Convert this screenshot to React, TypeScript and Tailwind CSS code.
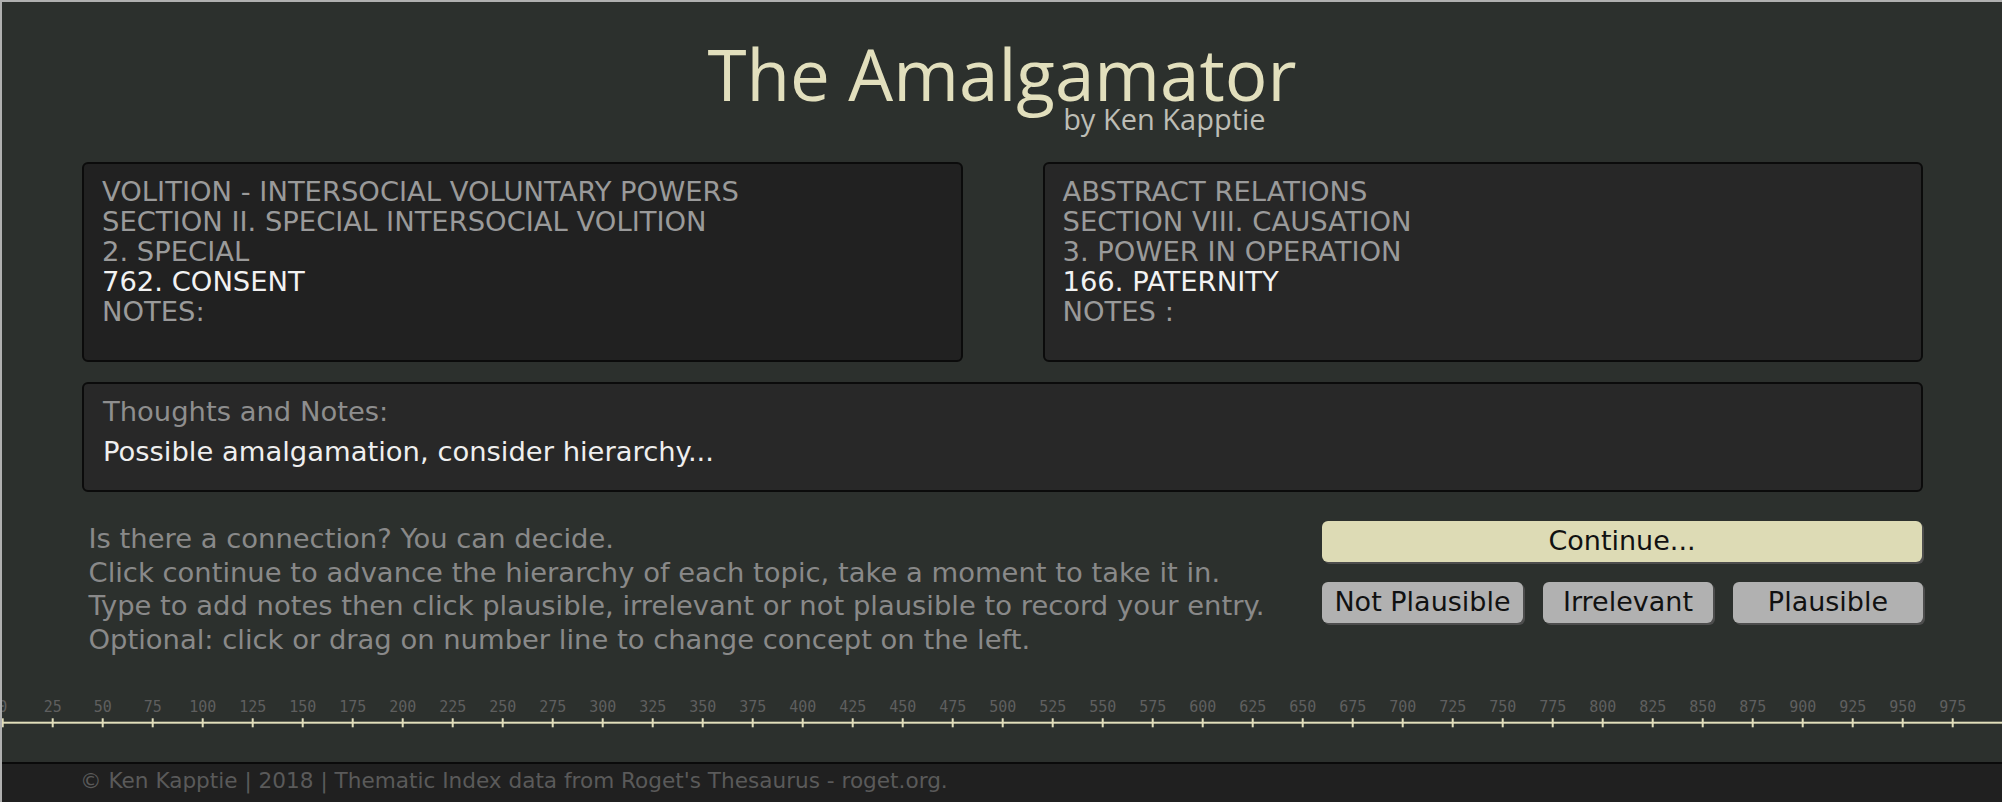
import React from "react";

type Topic = {
  lines: string[];
  heading: string;
  notes: string;
  tone: string;
};

const topics: Topic[] = [
  {
    lines: ["VOLITION - INTERSOCIAL VOLUNTARY POWERS", "SECTION II. SPECIAL INTERSOCIAL VOLITION", "2. SPECIAL"],
    heading: "762. CONSENT",
    notes: "NOTES:",
    tone: "bg-[#212121]",
  },
  {
    lines: ["ABSTRACT RELATIONS", "SECTION VIII. CAUSATION", "3. POWER IN OPERATION"],
    heading: "166. PATERNITY",
    notes: "NOTES :",
    tone: "bg-[#272727]",
  },
];

const instructions = [
  "Is there a connection? You can decide.",
  "Click continue to advance the hierarchy of each topic, take a moment to take it in.",
  "Type to add notes then click plausible, irrelevant or not plausible to record your entry.",
  "Optional: click or drag on number line to change concept on the left.",
];

const body = "font-['DejaVu_Sans',sans-serif]";

function TopicCard({ topic }: { topic: Topic }) {
  return (
    <div className={`h-[200px] rounded-[6px] border-2 border-[#0b0b0b] pl-[18px] pt-[13px] text-[27.4px] leading-[30px] ${topic.tone}`}>
      {topic.lines.map((l) => (
        <div key={l} className="text-[#9a9a9a]">
          {l}
        </div>
      ))}
      <div className="text-[#f2f2f2]">{topic.heading}</div>
      <div className="text-[#9a9a9a]">{topic.notes}</div>
    </div>
  );
}

function NumberLine() {
  const ticks = Array.from({ length: 40 }, (_, i) => i * 25);
  return (
    <svg width="2000" height="72" viewBox="0 0 2000 72" className="block">
      <rect x="0" y="31.7" width="2000" height="2" fill="#e2debb" />
      {ticks.map((t) => {
        const x = 0.7 + t * 2;
        return (
          <g key={t}>
            <rect x={x - 1} y="28.3" width="2" height="9" fill="#e2debb" />
            <text
              x={x}
              y="21.5"
              textAnchor="middle"
              fill="#5f5f5f"
              fontSize="15"
              fontFamily="'DejaVu Sans Mono', monospace"
            >
              {t}
            </text>
          </g>
        );
      })}
    </svg>
  );
}

export default function App() {
  return (
    <div className={`flex h-[802px] w-full flex-col overflow-hidden border-l-2 border-t-2 border-[#b0b0b0] bg-[#2c302d] ${body}`}>
      <header className="flex justify-center pt-[42px]">
        <div className="flex flex-col items-end">
          <h1 className="font-['Open_Sans',sans-serif] text-[71px] leading-[60px] text-[#e2dfbd]">The Amalgamator</h1>
          <p className="mr-[31px] mt-[2.5px] font-['Open_Sans',sans-serif] text-[29px] leading-[24px] text-[#bdbdb5]">
            by Ken Kapptie
          </p>
        </div>
      </header>

      <main className="pl-[80px] pr-[79px]">
        <div className="mt-[31px] grid grid-cols-2 gap-x-[80px]">
          {topics.map((t) => (
            <TopicCard key={t.heading} topic={t} />
          ))}
        </div>

        <div className="mt-[20px] h-[110px] rounded-[6px] border-2 border-[#0b0b0b] bg-[#282828] pl-[19px] pt-[8px] text-[27.4px] leading-[40px]">
          <div className="text-[#8e8e8e]">Thoughts and Notes:</div>
          <div className="text-[#efefef]">Possible amalgamation, consider hierarchy...</div>
        </div>

        <div className="mt-[29px] flex items-start justify-between">
          <div className="pl-[6.5px] pt-[1.5px] text-[27.4px] leading-[33.7px] text-[#898989]">
            {instructions.map((l) => (
              <div key={l}>{l}</div>
            ))}
          </div>

          <div className="flex w-[601px] flex-col gap-[20px]">
            <button className="h-[41px] w-[600px] rounded-[6px] bg-[#dddbb5] text-[27px] text-[#111] shadow-[2px_2px_0_#4d4d4d]">
              Continue...
            </button>
            <div className="flex gap-[20px]">
              <button className="h-[41px] w-[201px] rounded-[6px] bg-[#b1b1b1] text-[27px] text-[#111] shadow-[2px_2px_0_#4d4d4d]">
                Not Plausible
              </button>
              <button className="h-[41px] w-[170px] rounded-[6px] bg-[#b1b1b1] text-[27px] text-[#111] shadow-[2px_2px_0_#4d4d4d]">
                Irrelevant
              </button>
              <button className="h-[41px] w-[190px] rounded-[6px] bg-[#b1b1b1] text-[27px] text-[#111] shadow-[2px_2px_0_#4d4d4d]">
                Plausible
              </button>
            </div>
          </div>
        </div>
      </main>

      <div className="mt-auto">
        <NumberLine />
        <footer className="h-[40px] border-t-2 border-[#0a0a0a] bg-[#202020] pl-[78px] text-[21.6px] leading-[34px] text-[#5a5a5a]">
          © Ken Kapptie | 2018 | Thematic Index data from Roget's Thesaurus - roget.org.
        </footer>
      </div>
    </div>
  );
}
